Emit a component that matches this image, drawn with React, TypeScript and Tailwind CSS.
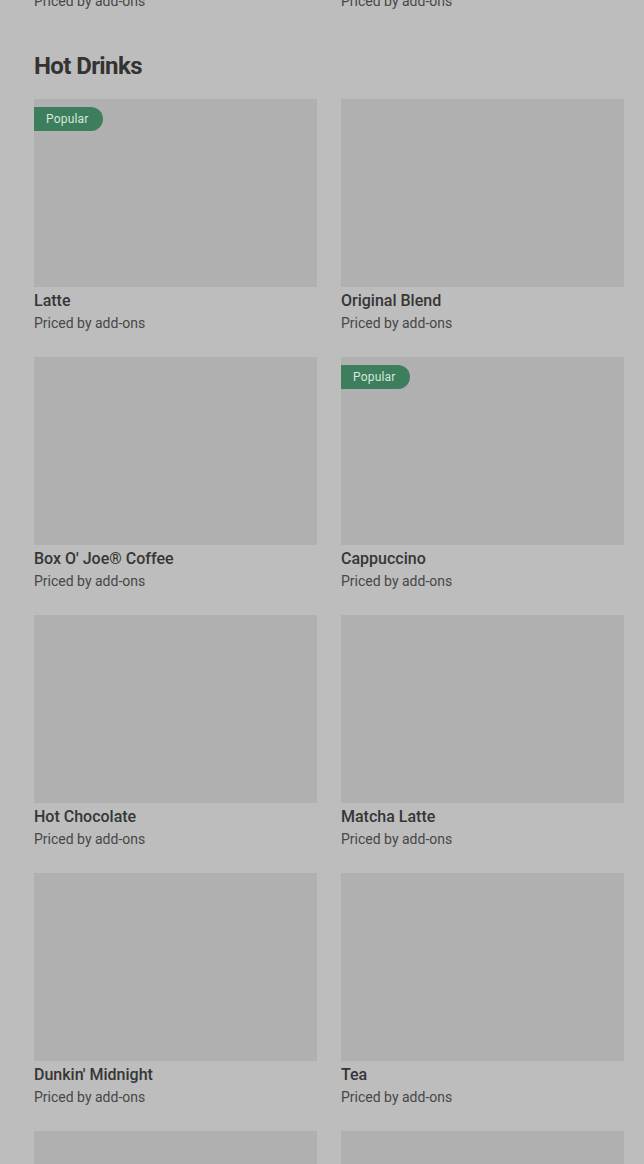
const items = [
  { name: "Latte", popular: true },
  { name: "Original Blend", popular: false },
  { name: "Box O' Joe® Coffee", popular: false },
  { name: "Cappuccino", popular: true },
  { name: "Hot Chocolate", popular: false },
  { name: "Matcha Latte", popular: false },
  { name: "Dunkin' Midnight", popular: false },
  { name: "Tea", popular: false },
  { name: "Iced Latte", popular: false },
  { name: "Iced Coffee", popular: false },
];

function ItemCard({ name, popular }: { name: string; popular: boolean }) {
  return (
    <div>
      <div className="relative h-[188px] bg-[#b0b0b0]">
        {popular && (
          <span className="absolute left-0 top-2 h-6 pl-3 pr-[14px] flex items-center rounded-r-full bg-[#3d7f5c] text-[12px] tracking-[0.2px] text-[#d4e6dc]">
            Popular
          </span>
        )}
      </div>
      <p className="mt-[2px] text-[16px] leading-6 font-medium text-[#363636]">{name}</p>
      <p className="text-[14px] leading-5 text-[#474747]">Priced by add-ons</p>
    </div>
  );
}

export default function App() {
  return (
    <div className="min-h-screen bg-[#bdbdbd] pl-[34px] pr-[20px] font-['Roboto',sans-serif] overflow-hidden">
      <div className="grid grid-cols-2 gap-x-6 -mt-[9px]">
        <p className="text-[14px] leading-5 text-[#474747]">Priced by add-ons</p>
        <p className="text-[14px] leading-5 text-[#474747]">Priced by add-ons</p>
      </div>
      <h2 className="mt-[39px] text-[24px] leading-8 font-bold tracking-[-0.6px] text-[#333333]">
        Hot Drinks
      </h2>
      <div className="mt-[17px] grid grid-cols-2 gap-x-6 gap-y-6">
        {items.map((item, i) => (
          <ItemCard key={i} name={item.name} popular={item.popular} />
        ))}
      </div>
    </div>
  );
}
